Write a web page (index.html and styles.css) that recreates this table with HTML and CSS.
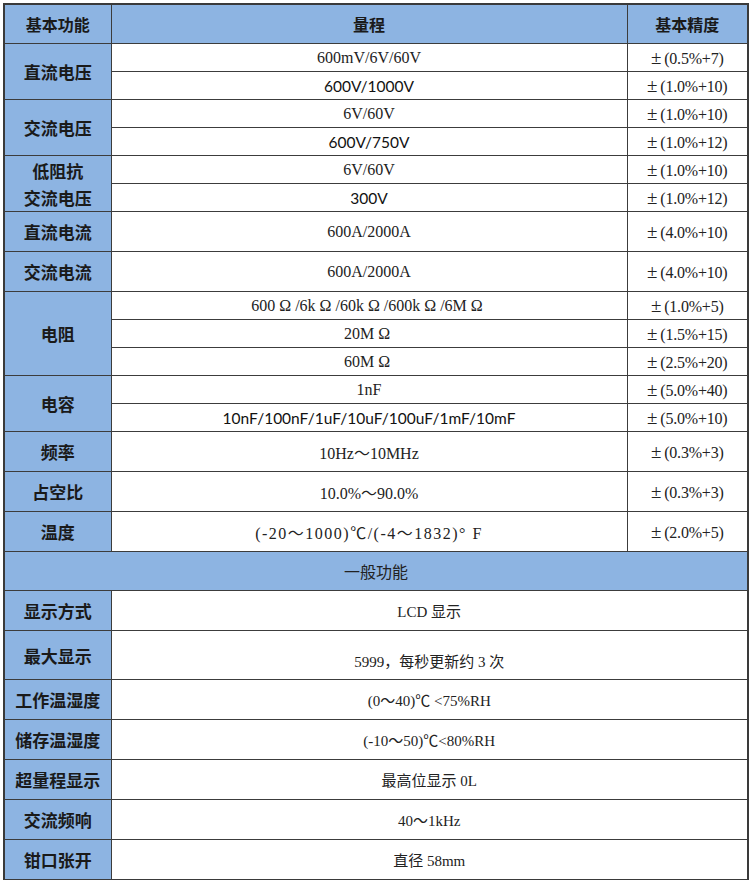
FILE: index.html
```html
<!DOCTYPE html>
<html lang="zh-CN">
<head>
<meta charset="utf-8">
<title>基本功能</title>
<link rel="stylesheet" href="styles.css">
</head>
<body>
<table class="spec">
  <colgroup>
    <col class="c1">
    <col class="c2">
    <col class="c3">
  </colgroup>
  <tr class="hdr">
    <th>基本功能</th>
    <th>量程</th>
    <th>基本精度</th>
  </tr>
  <tr class="s">
    <td class="lbl" rowspan="2">直流电压</td>
    <td class="rng">600mV/6V/60V</td>
    <td class="acc"><span class="pm">±</span>(0.5%+7)</td>
  </tr>
  <tr class="s">
    <td class="rng sans">600V/1000V</td>
    <td class="acc"><span class="pm">±</span>(1.0%+10)</td>
  </tr>
  <tr class="s">
    <td class="lbl" rowspan="2">交流电压</td>
    <td class="rng">6V/60V</td>
    <td class="acc"><span class="pm">±</span>(1.0%+10)</td>
  </tr>
  <tr class="s">
    <td class="rng sans">600V/750V</td>
    <td class="acc"><span class="pm">±</span>(1.0%+12)</td>
  </tr>
  <tr class="s">
    <td class="lbl two" rowspan="2">低阻抗<br>交流电压</td>
    <td class="rng">6V/60V</td>
    <td class="acc"><span class="pm">±</span>(1.0%+10)</td>
  </tr>
  <tr class="s">
    <td class="rng sans">300V</td>
    <td class="acc"><span class="pm">±</span>(1.0%+12)</td>
  </tr>
  <tr class="b">
    <td class="lbl">直流电流</td>
    <td class="rng">600A/2000A</td>
    <td class="acc"><span class="pm">±</span>(4.0%+10)</td>
  </tr>
  <tr class="b">
    <td class="lbl">交流电流</td>
    <td class="rng">600A/2000A</td>
    <td class="acc"><span class="pm">±</span>(4.0%+10)</td>
  </tr>
  <tr class="s">
    <td class="lbl" rowspan="3">电阻</td>
    <td class="rng">600<span class="om">Ω</span>/6k<span class="om">Ω</span>/60k<span class="om">Ω</span>/600k<span class="om">Ω</span>/6M<span class="om">Ω</span></td>
    <td class="acc"><span class="pm">±</span>(1.0%+5)</td>
  </tr>
  <tr class="s">
    <td class="rng">20M<span class="om">Ω</span></td>
    <td class="acc"><span class="pm">±</span>(1.5%+15)</td>
  </tr>
  <tr class="s">
    <td class="rng">60M<span class="om">Ω</span></td>
    <td class="acc"><span class="pm">±</span>(2.5%+20)</td>
  </tr>
  <tr class="s">
    <td class="lbl" rowspan="2">电容</td>
    <td class="rng">1nF</td>
    <td class="acc"><span class="pm">±</span>(5.0%+40)</td>
  </tr>
  <tr class="s">
    <td class="rng sans">10nF/100nF/1uF/10uF/100uF/1mF/10mF</td>
    <td class="acc"><span class="pm">±</span>(5.0%+10)</td>
  </tr>
  <tr class="b">
    <td class="lbl">频率</td>
    <td class="rng">10Hz～10MHz</td>
    <td class="acc"><span class="pm">±</span>(0.3%+3)</td>
  </tr>
  <tr class="b">
    <td class="lbl">占空比</td>
    <td class="rng">10.0%～90.0%</td>
    <td class="acc"><span class="pm">±</span>(0.3%+3)</td>
  </tr>
  <tr class="b">
    <td class="lbl">温度</td>
    <td class="rng wide">(-20～1000)℃/(-4～1832)° F</td>
    <td class="acc"><span class="pm">±</span>(2.0%+5)</td>
  </tr>
  <tr class="sec">
    <td colspan="3">一般功能</td>
  </tr>
  <tr class="b">
    <td class="lbl">显示方式</td>
    <td class="val" colspan="2">LCD 显示</td>
  </tr>
  <tr class="xl">
    <td class="lbl">最大显示</td>
    <td class="val low" colspan="2">5999，每秒更新约 3 次</td>
  </tr>
  <tr class="b">
    <td class="lbl">工作温湿度</td>
    <td class="val" colspan="2">(0～40)℃ &lt;75%RH</td>
  </tr>
  <tr class="b">
    <td class="lbl">储存温湿度</td>
    <td class="val" colspan="2">(-10～50)℃&lt;80%RH</td>
  </tr>
  <tr class="b">
    <td class="lbl">超量程显示</td>
    <td class="val" colspan="2">最高位显示 0L</td>
  </tr>
  <tr class="b">
    <td class="lbl">交流频响</td>
    <td class="val" colspan="2">40～1kHz</td>
  </tr>
  <tr class="b">
    <td class="lbl">钳口张开</td>
    <td class="val" colspan="2">直径 58mm</td>
  </tr>
</table>
</body>
</html>
```

FILE: styles.css
```css
html, body {
  margin: 0;
  padding: 0;
  background: #ffffff;
}

body {
  padding: 3px 3px 0 3px;
}

.spec {
  width: 744px;
  border-collapse: collapse;
  table-layout: fixed;
  border: 2px solid #3a3a3a;
  color: #1e1e1e;
}

.c1 { width: 107px; }
.c2 { width: 516px; }
.c3 { width: 121px; }

.spec th,
.spec td {
  border: 1px solid #3c3c3c;
  padding: 0;
  text-align: center;
  vertical-align: middle;
}

.hdr th {
  height: 38px;
  background: #8db4e2;
  font-family: "Noto Sans CJK SC", sans-serif;
  font-weight: 700;
  font-size: 16px;
  color: #1a1a1a;
}

.s td { height: 27px; }
.b td { height: 39px; }
.xl td { height: 48px; }

.lbl {
  background: #8db4e2;
  font-family: "Noto Sans CJK SC", sans-serif;
  font-weight: 700;
  font-size: 17px;
  color: #1a1a1a;
  line-height: 27px;
}

.rng,
.acc,
.val {
  font-family: "Liberation Serif", "Noto Sans CJK SC", serif;
  font-size: 16px;
  color: #222222;
}

.acc {
  font-size: 16px;
  padding-right: 8px;
  letter-spacing: -0.2px;
}

.pm {
  font-size: 19px;
  margin-right: 3px;
}

.om {
  margin: 0 4px;
}

.rng.wide {
  letter-spacing: 1.5px;
}

.rng.sans {
  font-family: "Lato", "Liberation Sans", sans-serif;
  font-size: 15.5px;
  color: #111111;
}

.val {
  font-size: 15px;
}

.xl .val.low {
  height: 34px;
  padding-top: 14px;
  line-height: 20px;
}

.sec td {
  height: 38px;
  background: #8db4e2;
  font-family: "Noto Sans CJK SC", sans-serif;
  font-weight: 400;
  font-size: 16px;
  color: #222222;
}
```
